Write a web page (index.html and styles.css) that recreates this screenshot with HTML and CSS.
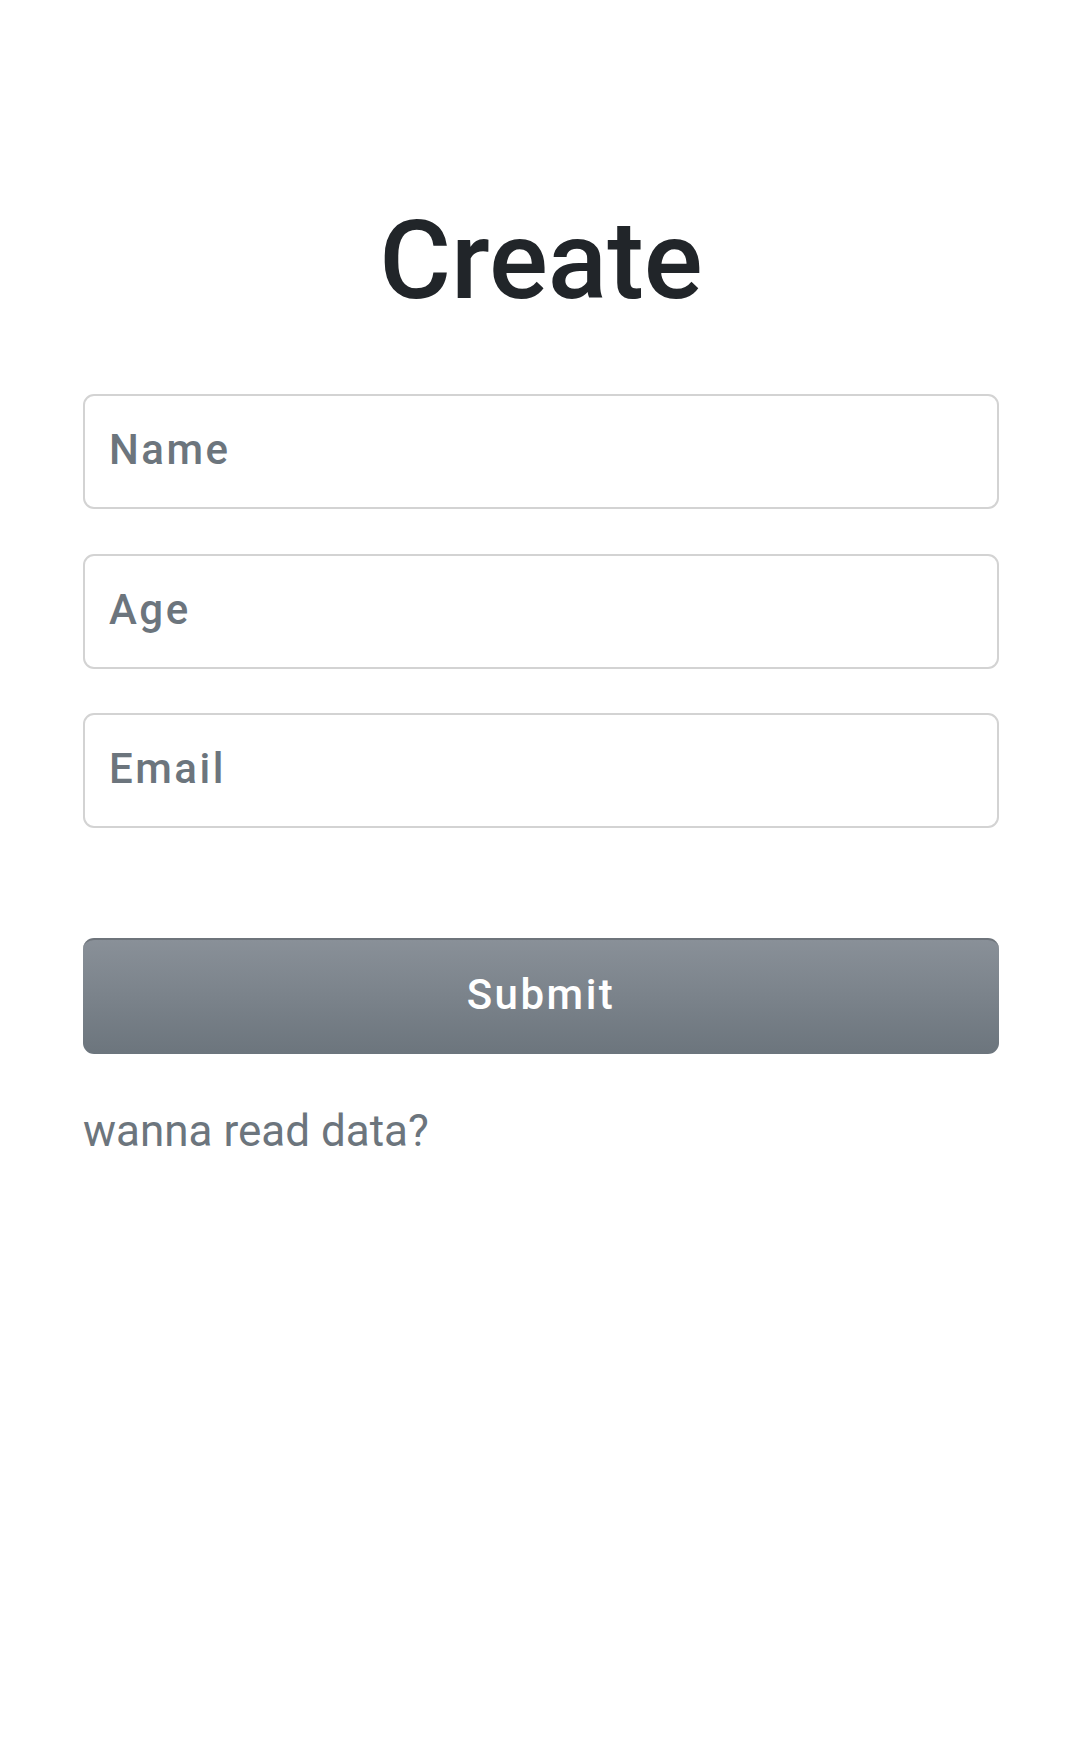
FILE: index.html
```html
<!DOCTYPE html>
<html lang="en">
<head>
<meta charset="utf-8">
<title>Create</title>
<link rel="stylesheet" href="styles.css">
</head>
<body>
<main class="page">
  <h1 class="title">Create</h1>
  <form class="form">
    <input class="field" type="text" placeholder="Name">
    <input class="field" type="number" placeholder="Age">
    <input class="field" type="email" placeholder="Email">
    <button class="submit" type="button">Submit</button>
  </form>
  <a class="link" href="#">wanna read data?</a>
</main>
</body>
</html>
```
FILE: styles.css
```css
html, body {
  margin: 0;
  padding: 0;
  background: #ffffff;
}

body {
  font-family: Roboto, "Liberation Sans", sans-serif;
  color: #212529;
}

.page {
  width: 916px;
  margin: 0 auto 0 83px;
  padding-top: 195px;
  display: flex;
  flex-direction: column;
}

.title {
  margin: 0 0 67px;
  font-size: 110px;
  line-height: 132px;
  font-weight: 500;
  text-align: center;
  color: #212529;
}

.form {
  display: flex;
  flex-direction: column;
  margin: 0;
}

.field {
  box-sizing: border-box;
  width: 100%;
  height: 115px;
  margin: 0 0 44.5px;
  padding: 0 24px 4px;
  border: 2px solid #d3d3d3;
  border-radius: 11px;
  background: #fff;
  font-family: Roboto, "Liberation Sans", sans-serif;
  font-size: 42px;
  font-weight: 500;
  letter-spacing: 2.5px;
  color: #495057;
  outline: none;
  -moz-appearance: textfield;
}

.field::-webkit-outer-spin-button,
.field::-webkit-inner-spin-button {
  -webkit-appearance: none;
  margin: 0;
}

.field::placeholder {
  color: #6c757d;
  opacity: 1;
}

.submit {
  box-sizing: border-box;
  width: 100%;
  height: 116px;
  margin: 65.5px 0 0;
  padding: 0 0 5px;
  border: none;
  border-top: 2px solid #6e747b;
  border-radius: 11px;
  background: linear-gradient(to bottom, #899098, #6c757d);
  color: #ffffff;
  font-family: Roboto, "Liberation Sans", sans-serif;
  font-size: 42px;
  font-weight: 500;
  letter-spacing: 2.5px;
  cursor: pointer;
}

.link {
  display: block;
  margin-top: 51px;
  font-size: 44px;
  line-height: normal;
  color: #6c757d;
  text-decoration: none;
}
```
